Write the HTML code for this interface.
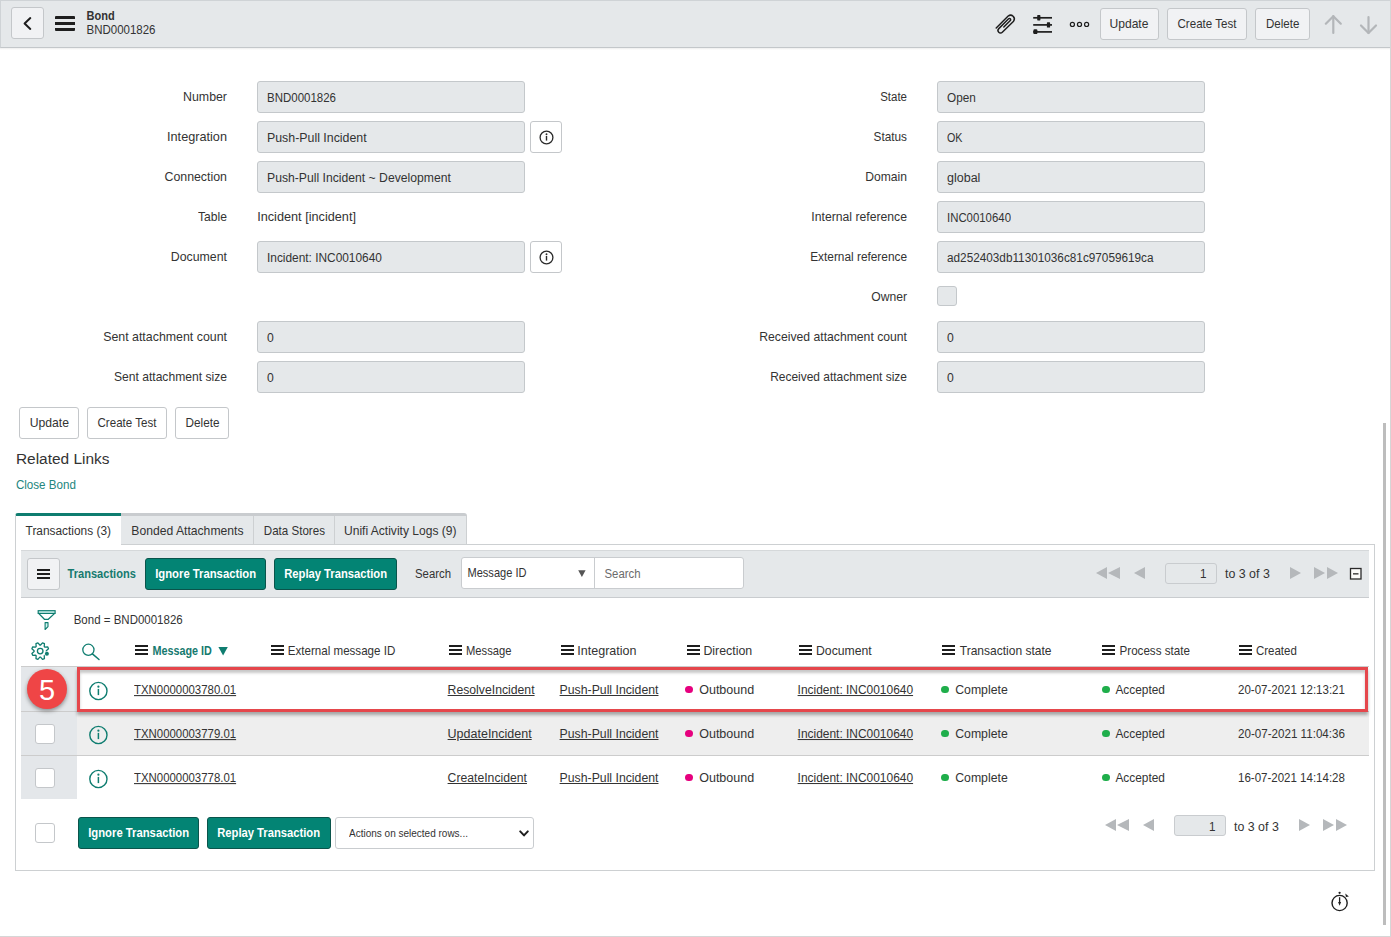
<!DOCTYPE html>
<html><head><meta charset="utf-8"><style>
*{box-sizing:border-box;margin:0;padding:0}
html,body{width:1391px;height:937px;overflow:hidden;background:#fff}
body{position:relative;font-family:"Liberation Sans",sans-serif;color:#2e2e2e}
.a{position:absolute}
.t{position:absolute;white-space:nowrap;line-height:1}
.btn{position:absolute;background:#f1f2f4;border:1px solid #c4c7ca;border-radius:3px;height:32px}
.wbtn{position:absolute;background:#fff;border:1px solid #c4c7ca;border-radius:3px;height:32px}
.inp{position:absolute;height:32px;background:#e5e8ea;border:1px solid #c4c8cb;border-radius:3px}
.tbtn{position:absolute;background:#038474;border:1px solid #0a544b;border-radius:3px;height:32px}
.cb{position:absolute;background:#fff;border:1px solid #c4c7ca;border-radius:3px}
</style></head><body>
<div class="a" style="left:0;top:0;width:1391px;height:48px;background:#e5e8ea;border-top:1px solid #cfd3d6;border-left:1px solid #cfd3d6;border-bottom:1px solid #c3c7ca"></div>
<div class="a" style="left:0;top:48px;width:1391px;height:2px;background:linear-gradient(rgba(0,0,0,.07),rgba(0,0,0,0))"></div>
<div class="btn" style="left:11px;top:7px;width:33px;height:32px"></div>
<svg class="a" style="left:0;top:0" width="60" height="48"><path d="M30.3 18.1 L24.6 23.5 L30.3 28.9" fill="none" stroke="#1e1e1e" stroke-width="2" stroke-linecap="round" stroke-linejoin="round"/></svg>
<div class="a" style="left:55px;top:16px;width:20px;height:15px;background:linear-gradient(#1e1e1e 0 3px,transparent 3px 6px,#1e1e1e 6px 9px,transparent 9px 12px,#1e1e1e 12px 15px);border-radius:1px"></div>
<div class="t" style="left:86.50px;top:11.00px;font-size:11.04px;font-weight:bold;color:#333;;transform:scaleY(1.150);transform-origin:0 9.00px;">Bond</div>
<div class="t" style="left:86.50px;top:25.00px;font-size:11.49px;font-weight:normal;color:#333;;transform:scaleY(1.062);transform-origin:0 9.00px;">BND0001826</div>
<svg class="a" style="left:990px;top:8px" width="110" height="32" viewBox="990 8 110 32">
<path d="M996.2 28 L1008.2 16 A3.8 3.8 0 0 1 1013.6 21.2 L1002.3 32.2 A2.5 2.5 0 0 1 998.8 28.6 L1008.6 18.8 A1.2 1.2 0 0 1 1010.3 20.5 L1003.8 27" fill="none" stroke="#1e1e1e" stroke-width="1.5" stroke-linecap="round" stroke-linejoin="round"/>
<g stroke="#1e1e1e" stroke-width="1.7"><line x1="1033.2" y1="17.8" x2="1052" y2="17.8"/><line x1="1033.2" y1="24.9" x2="1052" y2="24.9"/><line x1="1033.2" y1="31.9" x2="1052" y2="31.9"/></g>
<g fill="#1e1e1e"><rect x="1037.2" y="15.1" width="3.2" height="5.3" rx=".6"/><rect x="1046.9" y="22.3" width="3.2" height="5.2" rx=".6"/><rect x="1033.4" y="29.3" width="4" height="4.8" rx="1.2"/></g>
<g fill="none" stroke="#1e1e1e" stroke-width="1.2"><circle cx="1072.4" cy="24.45" r="2.05"/><circle cx="1079.5" cy="24.45" r="2.05"/><circle cx="1086.6" cy="24.45" r="2.05"/></g>
</svg>
<div class="btn" style="left:1100px;top:8px;width:59px"></div>
<div class="btn" style="left:1167px;top:8px;width:80px"></div>
<div class="btn" style="left:1255px;top:8px;width:55px"></div>
<div class="t" style="left:1109.50px;top:18.00px;font-size:12.09px;font-weight:normal;color:#333;;transform:scaleY(1.009);transform-origin:0 10.00px;">Update</div>
<div class="t" style="left:1177.50px;top:19.00px;font-size:11.58px;font-weight:normal;color:#333;;transform:scaleY(1.054);transform-origin:0 9.00px;">Create Test</div>
<div class="t" style="left:1266.00px;top:19.00px;font-size:11.55px;font-weight:normal;color:#333;;transform:scaleY(1.056);transform-origin:0 9.00px;">Delete</div>
<svg class="a" style="left:1320px;top:10px" width="64" height="30" viewBox="1320 10 64 30">
<g fill="none" stroke="#b3b6b9" stroke-width="2.2" stroke-linecap="round" stroke-linejoin="round">
<path d="M1333.3 16.2 L1333.3 33"/><path d="M1325.8 23.7 L1333.3 16.2 L1340.8 23.7"/>
<path d="M1368.5 17 L1368.5 33"/><path d="M1361 25.5 L1368.5 33 L1376 25.5"/>
</g></svg>
<div class="t" style="left:163.00px;width:64.00px;text-align:right;top:91.00px;font-size:12.37px;font-weight:normal;color:#333;;">Number</div>
<div class="inp" style="left:257px;top:81px;width:268px"></div>
<div class="t" style="left:267.00px;top:93.00px;font-size:11.49px;font-weight:normal;color:#333;;transform:scaleY(1.062);transform-origin:0 9.00px;">BND0001826</div>
<div class="t" style="left:147.00px;width:80.00px;text-align:right;top:131.00px;font-size:12.70px;font-weight:normal;color:#333;;">Integration</div>
<div class="inp" style="left:257px;top:121px;width:268px"></div>
<div class="t" style="left:267.00px;top:132.00px;font-size:12.36px;font-weight:normal;color:#333;;">Push-Pull Incident</div>
<div class="t" style="left:144.40px;width:82.60px;text-align:right;top:171.00px;font-size:12.37px;font-weight:normal;color:#333;;">Connection</div>
<div class="inp" style="left:257px;top:161px;width:268px"></div>
<div class="t" style="left:267.00px;top:172.00px;font-size:12.19px;font-weight:normal;color:#333;;">Push-Pull Incident ~ Development</div>
<div class="t" style="left:178.00px;width:49.00px;text-align:right;top:211.00px;font-size:12.13px;font-weight:normal;color:#333;;transform:scaleY(1.006);transform-origin:0 10.00px;">Table</div>
<div class="t" style="left:257.20px;top:211.00px;font-size:12.69px;font-weight:normal;color:#333;;">Incident [incident]</div>
<div class="t" style="left:150.70px;width:76.30px;text-align:right;top:251.00px;font-size:12.35px;font-weight:normal;color:#333;;">Document</div>
<div class="inp" style="left:257px;top:241px;width:268px"></div>
<div class="t" style="left:267.00px;top:253.00px;font-size:11.89px;font-weight:normal;color:#333;;transform:scaleY(1.026);transform-origin:0 9.00px;">Incident: INC0010640</div>
<div class="t" style="left:83.00px;width:144.00px;text-align:right;top:331.00px;font-size:12.39px;font-weight:normal;color:#333;;">Sent attachment count</div>
<div class="inp" style="left:257px;top:321px;width:268px"></div>
<div class="t" style="left:267.00px;top:332.00px;font-size:12.20px;font-weight:normal;color:#333;;">0</div>
<div class="t" style="left:93.90px;width:133.10px;text-align:right;top:371.00px;font-size:12.11px;font-weight:normal;color:#333;;transform:scaleY(1.007);transform-origin:0 10.00px;">Sent attachment size</div>
<div class="inp" style="left:257px;top:361px;width:268px"></div>
<div class="t" style="left:267.00px;top:372.00px;font-size:12.20px;font-weight:normal;color:#333;;">0</div>
<div class="wbtn" style="left:530px;top:121px;width:32px;height:32px"></div>
<svg class="a" style="left:530px;top:121px" width="32" height="32"><circle cx="16.5" cy="16.5" r="6.4" fill="none" stroke="#2a2a2a" stroke-width="1.3"/><circle cx="16.5" cy="13.3" r="0.95" fill="#2a2a2a"/><rect x="15.8" y="15" width="1.4" height="4.6" fill="#2a2a2a"/></svg>
<div class="wbtn" style="left:530px;top:241px;width:32px;height:32px"></div>
<svg class="a" style="left:530px;top:241px" width="32" height="32"><circle cx="16.5" cy="16.5" r="6.4" fill="none" stroke="#2a2a2a" stroke-width="1.3"/><circle cx="16.5" cy="13.3" r="0.95" fill="#2a2a2a"/><rect x="15.8" y="15" width="1.4" height="4.6" fill="#2a2a2a"/></svg>
<div class="t" style="left:860.20px;width:46.80px;text-align:right;top:92.00px;font-size:11.48px;font-weight:normal;color:#333;;transform:scaleY(1.063);transform-origin:0 9.00px;">State</div>
<div class="inp" style="left:937px;top:81px;width:268px"></div>
<div class="t" style="left:947.00px;top:92.00px;font-size:11.77px;font-weight:normal;color:#333;;transform:scaleY(1.037);transform-origin:0 10.00px;">Open</div>
<div class="t" style="left:853.50px;width:53.50px;text-align:right;top:132.00px;font-size:11.82px;font-weight:normal;color:#333;;transform:scaleY(1.032);transform-origin:0 9.00px;">Status</div>
<div class="inp" style="left:937px;top:121px;width:268px"></div>
<div class="t" style="left:947.00px;top:133.00px;font-size:10.73px;font-weight:normal;color:#333;;transform:scaleY(1.137);transform-origin:0 9.00px;">OK</div>
<div class="t" style="left:845.20px;width:61.80px;text-align:right;top:171.00px;font-size:12.13px;font-weight:normal;color:#333;;transform:scaleY(1.006);transform-origin:0 10.00px;">Domain</div>
<div class="inp" style="left:937px;top:161px;width:268px"></div>
<div class="t" style="left:947.00px;top:172.00px;font-size:12.51px;font-weight:normal;color:#333;;">global</div>
<div class="t" style="left:791.30px;width:115.70px;text-align:right;top:211.00px;font-size:12.21px;font-weight:normal;color:#333;;">Internal reference</div>
<div class="inp" style="left:937px;top:201px;width:268px"></div>
<div class="t" style="left:947.00px;top:213.00px;font-size:11.40px;font-weight:normal;color:#333;;transform:scaleY(1.070);transform-origin:0 9.00px;">INC0010640</div>
<div class="t" style="left:790.20px;width:116.80px;text-align:right;top:252.00px;font-size:11.85px;font-weight:normal;color:#333;;transform:scaleY(1.030);transform-origin:0 9.00px;">External reference</div>
<div class="inp" style="left:937px;top:241px;width:268px"></div>
<div class="t" style="left:947.00px;top:252.00px;font-size:11.77px;font-weight:normal;color:#333;;transform:scaleY(1.037);transform-origin:0 10.00px;">ad252403db11301036c81c97059619ca</div>
<div class="t" style="left:851.20px;width:55.80px;text-align:right;top:291.00px;font-size:12.15px;font-weight:normal;color:#333;;">Owner</div>
<div class="a" style="left:937px;top:286px;width:20px;height:20px;background:#e5e8ea;border:1px solid #c4c8cb;border-radius:3px"></div>
<div class="t" style="left:739.30px;width:167.70px;text-align:right;top:331.00px;font-size:12.19px;font-weight:normal;color:#333;;">Received attachment count</div>
<div class="inp" style="left:937px;top:321px;width:268px"></div>
<div class="t" style="left:947.00px;top:332.00px;font-size:12.20px;font-weight:normal;color:#333;;">0</div>
<div class="t" style="left:750.00px;width:157.00px;text-align:right;top:372.00px;font-size:11.96px;font-weight:normal;color:#333;;transform:scaleY(1.020);transform-origin:0 9.00px;">Received attachment size</div>
<div class="inp" style="left:937px;top:361px;width:268px"></div>
<div class="t" style="left:947.00px;top:372.00px;font-size:12.20px;font-weight:normal;color:#333;;">0</div>
<div class="wbtn" style="left:19px;top:407px;width:60px"></div>
<div class="wbtn" style="left:87px;top:407px;width:80px"></div>
<div class="wbtn" style="left:175px;top:407px;width:54px"></div>
<div class="t" style="left:29.70px;top:417.00px;font-size:12.19px;font-weight:normal;color:#333;;">Update</div>
<div class="t" style="left:97.50px;top:418.00px;font-size:11.58px;font-weight:normal;color:#333;;transform:scaleY(1.054);transform-origin:0 9.00px;">Create Test</div>
<div class="t" style="left:185.50px;top:417.00px;font-size:11.76px;font-weight:normal;color:#333;;transform:scaleY(1.037);transform-origin:0 10.00px;">Delete</div>
<div class="t" style="left:15.90px;top:451.00px;font-size:15.46px;font-weight:normal;color:#333;;">Related Links</div>
<div class="t" style="left:15.90px;top:479.00px;font-size:11.61px;font-weight:normal;color:#23867e;;transform:scaleY(1.051);transform-origin:0 10.00px;">Close Bond</div>
<div class="a" style="left:15px;top:544px;width:1360px;height:327px;border:1px solid #cdd0d2;border-top:1px solid #cdd0d2"></div>
<div class="a" style="left:120px;top:513px;width:347px;height:32px;background:#e5e8ea;border-top:3px solid #c9cccf;border-bottom:1px solid #cdd0d2;border-top-right-radius:3px"></div>
<div class="a" style="left:120px;top:513px;width:1px;height:32px;background:#cdd0d2"></div>
<div class="a" style="left:253px;top:516px;width:1px;height:28px;background:#cdd0d2"></div>
<div class="a" style="left:334px;top:516px;width:1px;height:28px;background:#cdd0d2"></div>
<div class="a" style="left:466px;top:515px;width:1px;height:30px;background:#cdd0d2"></div>
<div class="a" style="left:15px;top:513px;width:106px;height:33px;background:#fff;border-top:3px solid #0f7d70;border-left:1px solid #cdd0d2;border-top-left-radius:3px"></div>
<div class="t" style="left:25.60px;top:526.00px;font-size:11.88px;font-weight:normal;color:#333;;transform:scaleY(1.027);transform-origin:0 9.00px;">Transactions (3)</div>
<div class="t" style="left:131.30px;top:525.00px;font-size:12.17px;font-weight:normal;color:#333;;">Bonded Attachments</div>
<div class="t" style="left:263.80px;top:526.00px;font-size:11.59px;font-weight:normal;color:#333;;transform:scaleY(1.053);transform-origin:0 9.00px;">Data Stores</div>
<div class="t" style="left:344.00px;top:525.00px;font-size:12.05px;font-weight:normal;color:#333;;transform:scaleY(1.012);transform-origin:0 10.00px;">Unifi Activity Logs (9)</div>
<div class="a" style="left:21px;top:550px;width:1348px;height:48px;background:#e5e8ea;border-top:1px solid #d5d8da;border-bottom:1px solid #c9cccf"></div>
<div class="btn" style="left:27px;top:558px;width:33px;height:32px"></div>
<div class="a" style="left:37px;top:569px;width:13px;height:10px;background:linear-gradient(#1e1e1e 0 2px,transparent 2px 4px,#1e1e1e 4px 6px,transparent 6px 8px,#1e1e1e 8px 10px)"></div>
<div class="t" style="left:67.60px;top:569.00px;font-size:11.07px;font-weight:bold;color:#167a6f;;transform:scaleY(1.150);transform-origin:0 9.00px;">Transactions</div>
<div class="tbtn" style="left:145px;top:558px;width:121px"></div>
<div class="tbtn" style="left:274px;top:558px;width:123px"></div>
<div class="t" style="left:155.20px;top:569.00px;font-size:11.29px;font-weight:bold;color:#fff;;transform:scaleY(1.134);transform-origin:0 9.00px;">Ignore Transaction</div>
<div class="t" style="left:284.20px;top:569.00px;font-size:11.23px;font-weight:bold;color:#fff;;transform:scaleY(1.140);transform-origin:0 9.00px;">Replay Transaction</div>
<div class="t" style="left:415.00px;top:569.00px;font-size:11.36px;font-weight:normal;color:#333;;transform:scaleY(1.074);transform-origin:0 9.00px;">Search</div>
<div class="a" style="left:461px;top:557px;width:283px;height:32px;background:#fff;border:1px solid #c9cccf;border-radius:3px"></div>
<div class="a" style="left:594px;top:558px;width:1px;height:30px;background:#c9cccf"></div>
<div class="t" style="left:467.50px;top:568.00px;font-size:11.06px;font-weight:normal;color:#333;;transform:scaleY(1.103);transform-origin:0 9.00px;">Message ID</div>
<svg class="a" style="left:576px;top:567px" width="12" height="12"><path d="M2.2 3.2 L9.6 3.2 L5.9 10 Z" fill="#555"/></svg>
<div class="t" style="left:604.50px;top:569.00px;font-size:11.36px;font-weight:normal;color:#6b6b6b;;transform:scaleY(1.074);transform-origin:0 9.00px;">Search</div>
<svg class="a" style="left:1094px;top:565px" width="50" height="18" viewBox="1094 565 50 18">
<g fill="#b5b8bb"><path d="M1096 573 L1107 567 L1107 579 Z"/><path d="M1108 573 L1120 567 L1120 579 Z"/></g></svg>
<svg class="a" style="left:1133px;top:565px" width="14" height="18" viewBox="1133 565 14 18"><path d="M1134 573 L1145 567 L1145 579 Z" fill="#b5b8bb"/></svg>
<svg class="a" style="left:1289px;top:565px" width="14" height="18" viewBox="1289 565 14 18"><path d="M1301 573 L1290 567 L1290 579 Z" fill="#b5b8bb"/></svg>
<svg class="a" style="left:1313px;top:565px" width="30" height="18" viewBox="1313 565 30 18">
<g fill="#b5b8bb"><path d="M1325 573 L1314 567 L1314 579 Z"/><path d="M1338 573 L1327 567 L1327 579 Z"/></g></svg>
<div class="a" style="left:1165px;top:563px;width:52px;height:21px;background:#e5e8ea;border:1px solid #c9cccf;border-radius:3px"></div>
<div class="t" style="left:1180.00px;width:26.50px;text-align:right;top:568.00px;font-size:11.69px;font-weight:normal;color:#333;;transform:scaleY(1.044);transform-origin:0 10.00px;">1</div>
<div class="t" style="left:1225.00px;top:568.00px;font-size:12.40px;font-weight:normal;color:#333;;">to 3 of 3</div>
<svg class="a" style="left:1349px;top:567px" width="14" height="14"><rect x="1.5" y="1.5" width="10.5" height="10.5" fill="#fafafa" stroke="#2a2a2a" stroke-width="1.3"/><rect x="4" y="6.2" width="5.5" height="1.3" fill="#2a2a2a"/></svg>
<svg class="a" style="left:34px;top:606px" width="26" height="28" viewBox="34 606 26 28">
<rect x="38.2" y="610.7" width="16.9" height="2.7" fill="#d2f4f0" stroke="#0f7d70" stroke-width="1.2"/>
<path d="M38.9 613.6 L44.4 619.3 L48.3 619.3 L54.4 613.6" fill="none" stroke="#0f7d70" stroke-width="1.3" stroke-linejoin="round"/>
<path d="M45.1 622.6 L48.0 622.6 L48.0 626.6 L45.1 629.5 Z" fill="#d2f4f0" stroke="#0f7d70" stroke-width="1.1" stroke-linejoin="round"/>
</svg>
<div class="t" style="left:73.70px;top:615.00px;font-size:11.50px;font-weight:normal;color:#333;;transform:scaleY(1.061);transform-origin:0 9.00px;">Bond = BND0001826</div>
<svg class="a" style="left:28px;top:638px" width="80" height="26" viewBox="28 638 80 26">
<g fill="none" stroke="#0f7d70" stroke-width="1.3" stroke-linejoin="round">
<path d="M40.57 645.01 L42.50 642.81 L44.43 643.61 L44.24 646.53 L44.77 647.06 L47.69 646.87 L48.49 648.80 L46.29 650.73 L46.29 651.47 L48.49 653.40 L47.69 655.33 L44.77 655.14 L44.24 655.67 L44.43 658.59 L42.50 659.39 L40.57 657.19 L39.83 657.19 L37.90 659.39 L35.97 658.59 L36.16 655.67 L35.63 655.14 L32.71 655.33 L31.91 653.40 L34.11 651.47 L34.11 650.73 L31.91 648.80 L32.71 646.87 L35.63 647.06 L36.16 646.53 L35.97 643.61 L37.90 642.81 L39.83 645.01 Z"/>
<circle cx="40.2" cy="651.1" r="2.8"/>
<circle cx="88.4" cy="649.8" r="5.6"/><path d="M92.4 653.9 L99 659.5" stroke-width="1.5" stroke-linecap="round"/>
</g><circle cx="46.9" cy="653.8" r="2.6" fill="#fff"/><circle cx="46.9" cy="653.8" r="2" fill="#0f7d70"/></svg>
<div class="a" style="left:135px;top:645px;width:13px;height:10px;background:linear-gradient(#1e1e1e 0 2px,transparent 2px 4px,#1e1e1e 4px 6px,transparent 6px 8px,#1e1e1e 8px 10px)"></div>
<div class="a" style="left:271px;top:645px;width:13px;height:10px;background:linear-gradient(#1e1e1e 0 2px,transparent 2px 4px,#1e1e1e 4px 6px,transparent 6px 8px,#1e1e1e 8px 10px)"></div>
<div class="a" style="left:449px;top:645px;width:13px;height:10px;background:linear-gradient(#1e1e1e 0 2px,transparent 2px 4px,#1e1e1e 4px 6px,transparent 6px 8px,#1e1e1e 8px 10px)"></div>
<div class="a" style="left:561px;top:645px;width:13px;height:10px;background:linear-gradient(#1e1e1e 0 2px,transparent 2px 4px,#1e1e1e 4px 6px,transparent 6px 8px,#1e1e1e 8px 10px)"></div>
<div class="a" style="left:687px;top:645px;width:13px;height:10px;background:linear-gradient(#1e1e1e 0 2px,transparent 2px 4px,#1e1e1e 4px 6px,transparent 6px 8px,#1e1e1e 8px 10px)"></div>
<div class="a" style="left:799px;top:645px;width:13px;height:10px;background:linear-gradient(#1e1e1e 0 2px,transparent 2px 4px,#1e1e1e 4px 6px,transparent 6px 8px,#1e1e1e 8px 10px)"></div>
<div class="a" style="left:942px;top:645px;width:13px;height:10px;background:linear-gradient(#1e1e1e 0 2px,transparent 2px 4px,#1e1e1e 4px 6px,transparent 6px 8px,#1e1e1e 8px 10px)"></div>
<div class="a" style="left:1102px;top:645px;width:13px;height:10px;background:linear-gradient(#1e1e1e 0 2px,transparent 2px 4px,#1e1e1e 4px 6px,transparent 6px 8px,#1e1e1e 8px 10px)"></div>
<div class="a" style="left:1239px;top:645px;width:13px;height:10px;background:linear-gradient(#1e1e1e 0 2px,transparent 2px 4px,#1e1e1e 4px 6px,transparent 6px 8px,#1e1e1e 8px 10px)"></div>
<div class="t" style="left:152.50px;top:646.00px;font-size:10.81px;font-weight:bold;color:#167a6f;;transform:scaleY(1.150);transform-origin:0 9.00px;">Message ID</div>
<svg class="a" style="left:216px;top:644px" width="14" height="14"><path d="M2.4 3 L11.8 3 L7.1 11.5 Z" fill="#0f7d70"/></svg>
<div class="t" style="left:287.80px;top:646.00px;font-size:11.59px;font-weight:normal;color:#333;;transform:scaleY(1.053);transform-origin:0 9.00px;">External message ID</div>
<div class="t" style="left:466.00px;top:646.00px;font-size:11.21px;font-weight:normal;color:#333;;transform:scaleY(1.088);transform-origin:0 9.00px;">Message</div>
<div class="t" style="left:577.30px;top:645.00px;font-size:12.53px;font-weight:normal;color:#333;;">Integration</div>
<div class="t" style="left:703.40px;top:645.00px;font-size:12.37px;font-weight:normal;color:#333;;">Direction</div>
<div class="t" style="left:816.00px;top:645.00px;font-size:12.24px;font-weight:normal;color:#333;;">Document</div>
<div class="t" style="left:959.80px;top:645.00px;font-size:12.03px;font-weight:normal;color:#333;;transform:scaleY(1.014);transform-origin:0 10.00px;">Transaction state</div>
<div class="t" style="left:1119.50px;top:645.00px;font-size:11.64px;font-weight:normal;color:#333;;transform:scaleY(1.048);transform-origin:0 10.00px;">Process state</div>
<div class="t" style="left:1255.90px;top:646.00px;font-size:11.52px;font-weight:normal;color:#333;;transform:scaleY(1.059);transform-origin:0 9.00px;">Created</div>
<div class="a" style="left:21px;top:666px;width:1348px;height:45px;background:#fff;border-top:1px solid #cccccc"></div>
<div class="a" style="left:21px;top:711px;width:1348px;height:44px;background:#eeeeee;border-top:1px solid #cccccc"></div>
<div class="a" style="left:21px;top:755px;width:1348px;height:44px;background:#fff;border-top:1px solid #cccccc"></div>
<div class="a" style="left:21px;top:667px;width:56px;height:132px;background:#e4e7ea"></div>
<div class="a" style="left:21px;top:666px;width:56px;height:1px;background:#cccccc"></div>
<div class="a" style="left:21px;top:711px;width:56px;height:1px;background:#cccccc"></div>
<div class="a" style="left:21px;top:755px;width:56px;height:1px;background:#cccccc"></div>
<div class="cb" style="left:35px;top:724px;width:20px;height:20px"></div>
<div class="cb" style="left:35px;top:768px;width:20px;height:20px"></div>
<svg class="a" style="left:86px;top:678.5px" width="24" height="24"><circle cx="12.4" cy="12" r="8.6" fill="none" stroke="#0f7d70" stroke-width="1.4"/><circle cx="12.4" cy="7.7" r="1.1" fill="#0f7d70"/><rect x="11.65" y="9.9" width="1.5" height="6.2" fill="#0f7d70"/></svg>
<svg class="a" style="left:86px;top:723px" width="24" height="24"><circle cx="12.4" cy="12" r="8.6" fill="none" stroke="#0f7d70" stroke-width="1.4"/><circle cx="12.4" cy="7.7" r="1.1" fill="#0f7d70"/><rect x="11.65" y="9.9" width="1.5" height="6.2" fill="#0f7d70"/></svg>
<svg class="a" style="left:86px;top:767px" width="24" height="24"><circle cx="12.4" cy="12" r="8.6" fill="none" stroke="#0f7d70" stroke-width="1.4"/><circle cx="12.4" cy="7.7" r="1.1" fill="#0f7d70"/><rect x="11.65" y="9.9" width="1.5" height="6.2" fill="#0f7d70"/></svg>
<div class="t" style="left:134.00px;top:685.00px;font-size:11.42px;font-weight:normal;color:#333;text-decoration:underline;transform:scaleY(1.068);transform-origin:0 9.00px;">TXN0000003780.01</div>
<div class="t" style="left:447.60px;top:684.00px;font-size:12.23px;font-weight:normal;color:#333;text-decoration:underline;">ResolveIncident</div>
<div class="t" style="left:559.60px;top:684.00px;font-size:12.28px;font-weight:normal;color:#333;text-decoration:underline;">Push-Pull Incident</div>
<div class="a" style="left:685px;top:685.5px;width:7.5px;height:7.5px;border-radius:50%;background:#e6007e"></div>
<div class="t" style="left:699.20px;top:684.00px;font-size:12.52px;font-weight:normal;color:#333;;">Outbound</div>
<div class="t" style="left:797.60px;top:685.00px;font-size:11.94px;font-weight:normal;color:#333;text-decoration:underline;transform:scaleY(1.022);transform-origin:0 9.00px;">Incident: INC0010640</div>
<div class="a" style="left:941px;top:685.5px;width:7.5px;height:7.5px;border-radius:50%;background:#1fae4b"></div>
<div class="t" style="left:955.20px;top:684.00px;font-size:12.29px;font-weight:normal;color:#333;;">Complete</div>
<div class="a" style="left:1102.4px;top:685.5px;width:7.5px;height:7.5px;border-radius:50%;background:#1fae4b"></div>
<div class="t" style="left:1115.40px;top:685.00px;font-size:11.90px;font-weight:normal;color:#333;;transform:scaleY(1.025);transform-origin:0 9.00px;">Accepted</div>
<div class="t" style="left:1238.00px;top:685.00px;font-size:11.52px;font-weight:normal;color:#333;;transform:scaleY(1.059);transform-origin:0 9.00px;">20-07-2021 12:13:21</div>
<div class="t" style="left:134.00px;top:729.00px;font-size:11.42px;font-weight:normal;color:#333;text-decoration:underline;transform:scaleY(1.068);transform-origin:0 9.00px;">TXN0000003779.01</div>
<div class="t" style="left:447.60px;top:728.00px;font-size:12.50px;font-weight:normal;color:#333;text-decoration:underline;">UpdateIncident</div>
<div class="t" style="left:559.60px;top:728.00px;font-size:12.28px;font-weight:normal;color:#333;text-decoration:underline;">Push-Pull Incident</div>
<div class="a" style="left:685px;top:729.5px;width:7.5px;height:7.5px;border-radius:50%;background:#e6007e"></div>
<div class="t" style="left:699.20px;top:728.00px;font-size:12.52px;font-weight:normal;color:#333;;">Outbound</div>
<div class="t" style="left:797.60px;top:729.00px;font-size:11.94px;font-weight:normal;color:#333;text-decoration:underline;transform:scaleY(1.022);transform-origin:0 9.00px;">Incident: INC0010640</div>
<div class="a" style="left:941px;top:729.5px;width:7.5px;height:7.5px;border-radius:50%;background:#1fae4b"></div>
<div class="t" style="left:955.20px;top:728.00px;font-size:12.29px;font-weight:normal;color:#333;;">Complete</div>
<div class="a" style="left:1102.4px;top:729.5px;width:7.5px;height:7.5px;border-radius:50%;background:#1fae4b"></div>
<div class="t" style="left:1115.40px;top:729.00px;font-size:11.90px;font-weight:normal;color:#333;;transform:scaleY(1.025);transform-origin:0 9.00px;">Accepted</div>
<div class="t" style="left:1238.00px;top:728.00px;font-size:11.62px;font-weight:normal;color:#333;;transform:scaleY(1.050);transform-origin:0 10.00px;">20-07-2021 11:04:36</div>
<div class="t" style="left:134.00px;top:773.00px;font-size:11.42px;font-weight:normal;color:#333;text-decoration:underline;transform:scaleY(1.068);transform-origin:0 9.00px;">TXN0000003778.01</div>
<div class="t" style="left:447.60px;top:772.00px;font-size:12.21px;font-weight:normal;color:#333;text-decoration:underline;">CreateIncident</div>
<div class="t" style="left:559.60px;top:772.00px;font-size:12.28px;font-weight:normal;color:#333;text-decoration:underline;">Push-Pull Incident</div>
<div class="a" style="left:685px;top:773.5px;width:7.5px;height:7.5px;border-radius:50%;background:#e6007e"></div>
<div class="t" style="left:699.20px;top:772.00px;font-size:12.52px;font-weight:normal;color:#333;;">Outbound</div>
<div class="t" style="left:797.60px;top:773.00px;font-size:11.94px;font-weight:normal;color:#333;text-decoration:underline;transform:scaleY(1.022);transform-origin:0 9.00px;">Incident: INC0010640</div>
<div class="a" style="left:941px;top:773.5px;width:7.5px;height:7.5px;border-radius:50%;background:#1fae4b"></div>
<div class="t" style="left:955.20px;top:772.00px;font-size:12.29px;font-weight:normal;color:#333;;">Complete</div>
<div class="a" style="left:1102.4px;top:773.5px;width:7.5px;height:7.5px;border-radius:50%;background:#1fae4b"></div>
<div class="t" style="left:1115.40px;top:773.00px;font-size:11.90px;font-weight:normal;color:#333;;transform:scaleY(1.025);transform-origin:0 9.00px;">Accepted</div>
<div class="t" style="left:1238.00px;top:773.00px;font-size:11.52px;font-weight:normal;color:#333;;transform:scaleY(1.059);transform-origin:0 9.00px;">16-07-2021 14:14:28</div>
<div class="a" style="left:77px;top:667px;width:1291px;height:44.5px;border:3px solid #e5474c;box-shadow:0 3px 3px rgba(0,0,0,.3),inset 0 3px 3px rgba(0,0,0,.22)"></div>
<div class="a" style="left:27px;top:669px;width:40px;height:40px;border-radius:50%;background:#ef4546;box-shadow:0 2px 4px rgba(0,0,0,.4)"></div>
<div class="t" style="left:39.00px;top:676.00px;font-size:29.00px;font-weight:normal;color:#fff;;">5</div>
<div class="cb" style="left:35px;top:823px;width:20px;height:20px"></div>
<div class="tbtn" style="left:78px;top:817px;width:121px"></div>
<div class="tbtn" style="left:207px;top:817px;width:124px"></div>
<div class="t" style="left:88.20px;top:828.00px;font-size:11.29px;font-weight:bold;color:#fff;;transform:scaleY(1.134);transform-origin:0 9.00px;">Ignore Transaction</div>
<div class="t" style="left:217.20px;top:828.00px;font-size:11.23px;font-weight:bold;color:#fff;;transform:scaleY(1.140);transform-origin:0 9.00px;">Replay Transaction</div>
<div class="a" style="left:335px;top:817px;width:199px;height:32px;background:#fff;border:1px solid #c9cccf;border-radius:3px"></div>
<div class="t" style="left:349.00px;top:829.00px;font-size:10.00px;font-weight:normal;color:#333;;transform:scaleY(1.150);transform-origin:0 8.00px;">Actions on selected rows...</div>
<svg class="a" style="left:515px;top:827px" width="18" height="14"><path d="M5.2 4.4 L9 8.4 L12.8 4.4" fill="none" stroke="#1e1e1e" stroke-width="2" stroke-linecap="round" stroke-linejoin="round"/></svg>
<svg class="a" style="left:1103px;top:817px" width="50" height="18" viewBox="1103 817 50 18">
<g fill="#b5b8bb"><path d="M1105 825 L1116 819 L1116 831 Z"/><path d="M1117 825 L1129 819 L1129 831 Z"/></g></svg>
<svg class="a" style="left:1142px;top:817px" width="14" height="18" viewBox="1142 817 14 18"><path d="M1143 825 L1154 819 L1154 831 Z" fill="#b5b8bb"/></svg>
<svg class="a" style="left:1298px;top:817px" width="14" height="18" viewBox="1298 817 14 18"><path d="M1310 825 L1299 819 L1299 831 Z" fill="#b5b8bb"/></svg>
<svg class="a" style="left:1322px;top:817px" width="30" height="18" viewBox="1322 817 30 18">
<g fill="#b5b8bb"><path d="M1334 825 L1323 819 L1323 831 Z"/><path d="M1347 825 L1336 819 L1336 831 Z"/></g></svg>
<div class="a" style="left:1174px;top:815px;width:52px;height:21px;background:#e5e8ea;border:1px solid #c9cccf;border-radius:3px"></div>
<div class="t" style="left:1189.00px;width:26.50px;text-align:right;top:821.00px;font-size:11.69px;font-weight:normal;color:#333;;transform:scaleY(1.044);transform-origin:0 10.00px;">1</div>
<div class="t" style="left:1234.00px;top:821.00px;font-size:12.40px;font-weight:normal;color:#333;;">to 3 of 3</div>
<svg class="a" style="left:1326px;top:886px" width="28" height="30" viewBox="1326 886 28 30"><circle cx="1339.6" cy="903" r="7.6" fill="none" stroke="#1e1e1e" stroke-width="1.4"/><circle cx="1339.6" cy="892.8" r="1.15" fill="#1e1e1e"/><path d="M1339.6 897.2 L1339.6 903" stroke="#1e1e1e" stroke-width="1.3"/><path d="M1338.1 902 L1341.1 902 L1339.6 905.7 Z" fill="#1e1e1e"/><path d="M1345.3 893.6 L1348.9 896.6 L1345.9 896.9 Z" fill="#1e1e1e"/></svg>
<div class="a" style="left:1383px;top:423px;width:3px;height:502px;background:#bdbdbd"></div>
<div class="a" style="left:1390px;top:0;width:1px;height:937px;background:#d6d6d6"></div>
<div class="a" style="left:0;top:936px;width:1391px;height:1px;background:#d6d6d6"></div>
</body></html>
